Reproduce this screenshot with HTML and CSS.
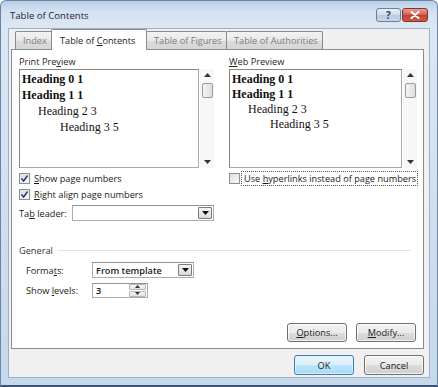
FILE: index.html
```html
<!DOCTYPE html>
<html>
<head>
<meta charset="utf-8">
<link rel="stylesheet" href="styles.css">
</head>
<body>
<div class="window">
  <div class="titlebar">
    <span class="title">Table of Contents</span>
    <div class="caption-btns">
      <div class="cbtn help">?</div>
      <div class="cbtn close">
        <svg width="10" height="8" viewBox="0 0 10 8"><path d="M1.5 1 L8.5 7 M8.5 1 L1.5 7" stroke="#fff" stroke-width="2" stroke-linecap="round"/></svg>
      </div>
    </div>
  </div>
  <div class="client">
    <div class="tabs">
      <div class="tab t-index"><span>Index</span></div>
      <div class="tab active"><span>Table of <u>C</u>ontents</span></div>
      <div class="tab t-fig"><span>Table of Figures</span></div>
      <div class="tab t-auth"><span>Table of Authorities</span></div>
    </div>
    <div class="panel">
      <div class="previews">
        <div class="col col-left">
          <div class="label">Print Pre<u>v</u>iew</div>
          <div class="preview-row">
            <div class="preview print">
              <div class="h h0">Heading 0 1</div>
              <div class="h h0">Heading 1 1</div>
              <div class="h h2">Heading 2 3</div>
              <div class="h h3">Heading 3 5</div>
            </div>
            <div class="scrollbar">
              <svg class="sarrow" width="7" height="4" viewBox="0 0 7 4"><path d="M0 4 L3.5 0 L7 4 Z" fill="#333"/></svg>
              <div class="thumb"></div>
              <div class="sfill"></div>
              <svg class="sarrow" width="7" height="4" viewBox="0 0 7 4"><path d="M0 0 L3.5 4 L7 0 Z" fill="#333"/></svg>
            </div>
          </div>
          <div class="check-row first">
            <span class="cb checked"><svg width="9" height="9" viewBox="0 0 9 9"><path d="M1.5 4.5 L3.6 7 L7.6 1.5" fill="none" stroke="#2a3f6b" stroke-width="1.6"/></svg></span>
            <span><u>S</u>how page numbers</span>
          </div>
          <div class="check-row">
            <span class="cb checked"><svg width="9" height="9" viewBox="0 0 9 9"><path d="M1.5 4.5 L3.6 7 L7.6 1.5" fill="none" stroke="#2a3f6b" stroke-width="1.6"/></svg></span>
            <span><u>R</u>ight align page numbers</span>
          </div>
          <div class="leader-row">
            <span class="leader-label">Ta<u>b</u> leader:</span>
            <div class="combo leader-combo">
              <span class="combo-text"></span>
              <span class="combo-btn"><svg width="7" height="4" viewBox="0 0 7 4"><path d="M0 0 L3.5 4 L7 0 Z" fill="#111"/></svg></span>
            </div>
          </div>
        </div>
        <div class="divider"></div>
        <div class="col col-right">
          <div class="label"><u>W</u>eb Preview</div>
          <div class="preview-row">
            <div class="preview web">
              <div class="h h0">Heading 0 1</div>
              <div class="h h0">Heading 1 1</div>
              <div class="h h2">Heading 2 3</div>
              <div class="h h3">Heading 3 5</div>
            </div>
            <div class="scrollbar">
              <svg class="sarrow" width="7" height="4" viewBox="0 0 7 4"><path d="M0 4 L3.5 0 L7 4 Z" fill="#333"/></svg>
              <div class="thumb"></div>
              <div class="sfill"></div>
              <svg class="sarrow" width="7" height="4" viewBox="0 0 7 4"><path d="M0 0 L3.5 4 L7 0 Z" fill="#333"/></svg>
            </div>
          </div>
          <div class="check-row first web-check">
            <span class="cb"></span>
            <span class="focus">Use <u>h</u>yperlinks instead of page numbers</span>
          </div>
        </div>
      </div>
      <div class="general">
        <div class="group-head"><span>General</span><span class="group-line"></span></div>
        <div class="field-row formats">
          <span class="field-label">Forma<u>t</u>s:</span>
          <div class="combo formats-combo">
            <span class="combo-text">From template</span>
            <span class="combo-btn"><svg width="7" height="4" viewBox="0 0 7 4"><path d="M0 0 L3.5 4 L7 0 Z" fill="#111"/></svg></span>
          </div>
        </div>
        <div class="field-row levels">
          <span class="field-label">Show <u>l</u>evels:</span>
          <div class="spin">
            <span class="spin-text">3</span>
            <span class="spin-btns">
              <span class="spin-btn"><svg width="5" height="3" viewBox="0 0 5 3"><path d="M0 3 L2.5 0 L5 3 Z" fill="#333"/></svg></span>
              <span class="spin-btn"><svg width="5" height="3" viewBox="0 0 5 3"><path d="M0 0 L2.5 3 L5 0 Z" fill="#333"/></svg></span>
            </span>
          </div>
        </div>
      </div>
      <div class="panel-btns">
        <div class="btn"><span><u>O</u>ptions...</span></div>
        <div class="btn"><span><u>M</u>odify...</span></div>
      </div>
    </div>
    <div class="dialog-btns">
      <div class="btn default"><span>OK</span></div>
      <div class="btn"><span>Cancel</span></div>
    </div>
  </div>
</div>
</body>
</html>
```

FILE: styles.css
```css
* { box-sizing: border-box; }
html, body { margin: 0; padding: 0; }
body {
  width: 438px;
  height: 387px;
  overflow: hidden;
  background: #fff;
  font-family: "Open Sans", "Noto Sans", sans-serif;
  font-size: 9.2px;
  color: #1a1a1a;
}
u { text-decoration: underline; text-underline-offset: 1px; }

.window {
  width: 438px;
  height: 387px;
  display: flex;
  flex-direction: column;
  border: 1px solid #6c84a3;
  border-bottom: 2px solid #3f5470;
  border-radius: 6px 6px 0 0;
  background: linear-gradient(180deg, #b9cde5 0, #d3e1f1 10px, #dce7f4 26px, #cfdeef 60%, #c6d8ec 100%);
}

.titlebar {
  height: 27px;
  flex: none;
  display: flex;
  align-items: flex-start;
  justify-content: space-between;
  padding: 0 9px 0 9px;
}
.title {
  margin-top: 8px;
  font-size: 9.6px;
  color: #1b2533;
}
.caption-btns {
  display: flex;
  margin-top: 7px;
  gap: 1px;
}
.cbtn {
  height: 14px;
  width: 25px;
  border: 1px solid #6b7f9c;
  border-radius: 3px;
  display: flex;
  align-items: center;
  justify-content: center;
}
.help {
  background: linear-gradient(180deg, #e8eef6 0, #cfdbe9 50%, #bccbdd 51%, #c9d7e7 100%);
  color: #30405a;
  font-size: 10px;
  font-weight: bold;
  line-height: 1;
}
.close {
  width: 26px;
  border-color: #8a2f2a;
  background: linear-gradient(180deg, #e7a097 0, #d2665a 45%, #c2402f 50%, #d05a44 100%);
}

.client {
  flex: none;
  height: 350px;
  margin: 0 7px 0 7px;
  border: 1px solid #9cb0c9;
  background: #f0f0f0;
  padding: 0 5px 0 2px;
  display: flex;
  flex-direction: column;
}

.tabs {
  height: 20px;
  flex: none;
  display: flex;
  align-items: flex-end;
  padding-left: 4px;
}
.tab {
  height: 18px;
  padding: 0 7px;
  border: 1px solid #898c95;
  border-bottom: none;
  border-radius: 2px 2px 0 0;
  background: linear-gradient(180deg, #f3f3f3 0, #e8e8e8 50%, #dcdcdc 51%, #d6d6d6 100%);
  color: #7d7d7d;
  display: flex;
  align-items: center;
  margin-right: -1px;
  white-space: nowrap;
}
.t-index { width: 39px; }
.t-fig { width: 81px; }
.t-auth { width: 97px; }
.tab.active {
  height: 21px;
  width: 96px;
  margin: 0 -1px -1px -2px;
  background: #fff;
  color: #1a1a1a;
  position: relative;
  z-index: 1;
  padding: 0 8px;
}

.panel {
  height: 300px;
  flex: none;
  border: 1px solid #898c95;
  background: #fff;
  padding: 6px 7px 0 7px;
  display: flex;
  flex-direction: column;
}

.previews {
  display: flex;
  height: 182px;
}
.col { display: flex; flex-direction: column; }
.col-left { width: 195px; }
.col-right { width: 188px; }
.divider {
  width: 1px;
  height: 180px;
  margin: 2px 9px 0 6px;
  background: #c9c9c9;
}
.label {
  height: 11px;
  line-height: 11px;
  margin-bottom: 2px;
  color: #262626;
}
.preview-row {
  display: flex;
  height: 99px;
  gap: 1px;
}
.preview {
  flex: 1;
  border: 1px solid #858585;
  border-right-color: #a8a8a8;
  border-bottom-color: #a8a8a8;
  padding: 1px 0 0 2px;
  font-family: "Liberation Serif", "Times New Roman", serif;
  font-size: 12px;
  color: #111;
}
.preview.print .h { line-height: 16px; height: 16px; }
.preview.web { padding-top: 2px; }
.preview.web .h { line-height: 15px; height: 15px; }
.h0 { font-weight: bold; }
.h2 { padding-left: 16px; }
.h3 { padding-left: 38px; }

.scrollbar {
  width: 14px;
  display: flex;
  flex-direction: column;
  align-items: center;
  background: #f7f7f7;
  padding: 3px 0 3px 0;
}
.sarrow { flex: none; margin: 1px 0; }
.thumb {
  width: 11px;
  height: 15px;
  margin-top: 5px;
  border: 1px solid #9a9a9a;
  border-radius: 2px;
  background: linear-gradient(90deg, #f4f4f4, #dedede);
}
.sfill { flex: 1; }

.check-row {
  height: 16px;
  display: flex;
  align-items: center;
  gap: 4px;
  white-space: nowrap;
}
.check-row.first { margin-top: 2px; }
.cb {
  width: 11px;
  height: 11px;
  flex: none;
  border: 1px solid #8e8f8f;
  background: linear-gradient(135deg, #dcdcdc, #fafafa);
  display: flex;
  align-items: center;
  justify-content: center;
}
.cb svg { display: block; }
.web-check { gap: 1px; }
.focus {
  border: 1px dotted #555;
  padding: 1px 1px 1px 2px;
  line-height: 11px;
}

.leader-row {
  margin-top: 3px;
  height: 16px;
  display: flex;
  align-items: center;
}
.leader-label { width: 53px; }
.combo {
  height: 16px;
  border: 1px solid #abadb3;
  border-top-color: #8e9297;
  background: #fff;
  display: flex;
  align-items: center;
  justify-content: space-between;
  padding: 0 1px 0 3px;
}
.leader-combo { width: 142px; }
.combo-text { font-weight: 600; color: #222; }
.combo-btn {
  width: 14px;
  height: 12px;
  border: 1px solid #7b7b7b;
  border-radius: 1px;
  background: linear-gradient(180deg, #f5f5f5, #dadada);
  display: flex;
  align-items: center;
  justify-content: center;
}

.general {
  margin-top: 7px;
  display: flex;
  flex-direction: column;
}
.group-head {
  height: 11px;
  line-height: 11px;
  display: flex;
  align-items: center;
  color: #333;
}
.group-line {
  flex: 1;
  height: 1px;
  margin: 0 5px 0 5px;
  background: #dde3ea;
}
.field-row {
  display: flex;
  align-items: center;
  padding-left: 7px;
  height: 16px;
}
.field-row.formats { margin-top: 6px; }
.field-row.levels { margin-top: 4px; }
.field-label { width: 66px; color: #222; }
.formats-combo { width: 102px; }
.spin {
  width: 56px;
  height: 15px;
  border: 1px solid #abadb3;
  border-top-color: #8e9297;
  background: #fff;
  display: flex;
  align-items: center;
  justify-content: space-between;
  padding: 0 1px 0 3px;
}
.spin-text { font-weight: 600; }
.spin-btns {
  display: flex;
  flex-direction: column;
  gap: 1px;
  height: 13px;
}
.spin-btn {
  width: 17px;
  height: 6px;
  border: 1px solid #b5b5b5;
  border-radius: 1px;
  background: linear-gradient(180deg, #f6f6f6, #e2e2e2);
  display: flex;
  align-items: center;
  justify-content: center;
}
.spin-btn svg { display: block; }

.panel-btns {
  margin-top: 25px;
  display: flex;
  justify-content: flex-end;
  gap: 9px;
}
.btn {
  width: 60px;
  height: 19px;
  border: 1px solid #707070;
  border-radius: 3px;
  background: linear-gradient(180deg, #f2f2f2 0, #ebebeb 50%, #dddddd 51%, #cfcfcf 100%);
  box-shadow: inset 0 0 0 1px rgba(255,255,255,0.75);
  display: flex;
  align-items: center;
  justify-content: center;
  color: #1a1a1a;
}
.btn.default {
  border-color: #3c7fb1;
  background: linear-gradient(180deg, #eaf6fd 0, #d9f0fc 50%, #bee6fd 51%, #a7d9f5 100%);
  box-shadow: inset 0 0 0 1px rgba(220,240,252,0.9);
}
.dialog-btns {
  margin-top: 6px;
  display: flex;
  justify-content: flex-end;
  gap: 10px;
}
.dialog-btns .btn { height: 20px; }
```
